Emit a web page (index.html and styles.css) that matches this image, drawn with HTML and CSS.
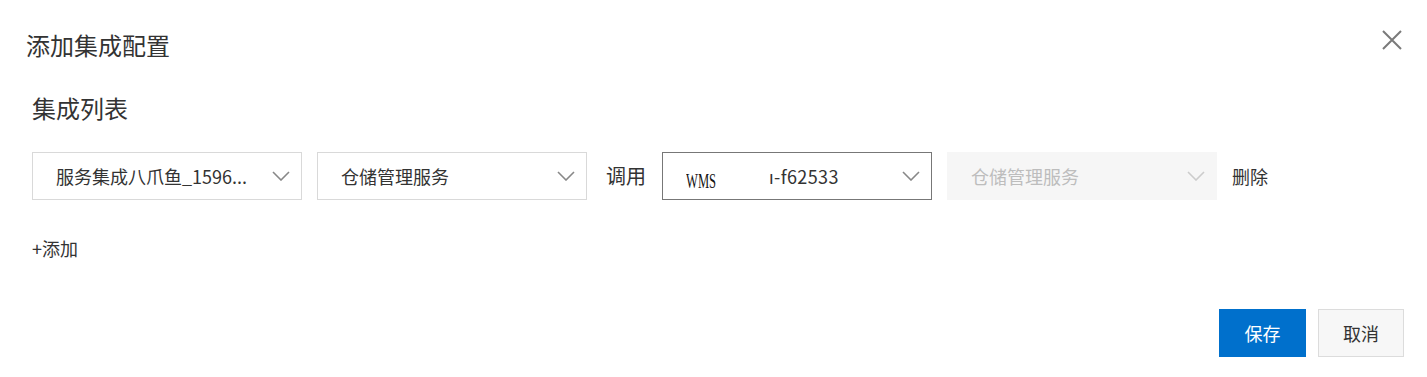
FILE: index.html
```html
<!DOCTYPE html>
<html lang="zh-CN">
<head>
<meta charset="utf-8">
<title>添加集成配置</title>
<link rel="stylesheet" href="styles.css">
</head>
<body>
<div class="dialog">
  <div class="dialog-header">
    <h1 class="dialog-title">添加集成配置</h1>
    <button class="close-btn" aria-label="关闭">
      <svg width="20" height="20" viewBox="0 0 20 20"><path d="M1 1 L19 19 M19 1 L1 19" stroke="#7a7a7a" stroke-width="2" fill="none"/></svg>
    </button>
  </div>
  <div class="dialog-body">
    <h2 class="section-title">集成列表</h2>
    <div class="config-row">
      <div class="select">
        <span class="select-text">服务集成八爪鱼_1596...</span>
        <svg class="chevron" width="18" height="10" viewBox="0 0 18 10"><polyline points="1,1 9,9 17,1" fill="none" stroke="#888" stroke-width="1.6"/></svg>
      </div>
      <div class="select">
        <span class="select-text">仓储管理服务</span>
        <svg class="chevron" width="18" height="10" viewBox="0 0 18 10"><polyline points="1,1 9,9 17,1" fill="none" stroke="#888" stroke-width="1.6"/></svg>
      </div>
      <span class="row-label">调用</span>
      <div class="select select-active">
        <span class="select-text"><span class="wms">WMS</span><span class="redacted"></span><span class="suffix">ı-f62533</span></span>
        <svg class="chevron" width="18" height="10" viewBox="0 0 18 10"><polyline points="1,1 9,9 17,1" fill="none" stroke="#888" stroke-width="1.6"/></svg>
      </div>
      <div class="select select-disabled">
        <span class="select-text">仓储管理服务</span>
        <svg class="chevron" width="18" height="10" viewBox="0 0 18 10"><polyline points="1,1 9,9 17,1" fill="none" stroke="#ccc" stroke-width="1.6"/></svg>
      </div>
      <span class="row-action">删除</span>
    </div>
    <div class="add-link">+添加</div>
  </div>
  <div class="dialog-footer">
    <button class="btn btn-primary">保存</button>
    <button class="btn btn-default">取消</button>
  </div>
</div>
</body>
</html>
```

FILE: styles.css
```css
* { box-sizing: border-box; }
html, body {
  margin: 0;
  padding: 0;
  background: #fff;
}
body {
  font-family: "Noto Sans CJK SC", "Noto Sans", sans-serif;
  color: #333;
  width: 1427px;
  height: 377px;
  overflow: hidden;
}
.dialog {
  display: flex;
  flex-direction: column;
  height: 377px;
}
.dialog-header {
  display: flex;
  justify-content: space-between;
  align-items: flex-start;
  padding: 29px 25px 0 26px;
}
.dialog-title {
  margin: 0;
  font-size: 24px;
  line-height: 32px;
  font-weight: 400;
  color: #333;
}
.close-btn {
  border: 0;
  background: none;
  padding: 0;
  margin-top: 1px;
  width: 20px;
  height: 20px;
  display: flex;
  cursor: pointer;
}
.dialog-body {
  padding: 31px 0 0 32px;
}
.section-title {
  margin: 0;
  font-size: 24px;
  line-height: 32px;
  font-weight: 400;
  color: #333;
}
.config-row {
  display: flex;
  align-items: center;
  gap: 15px;
  margin-top: 28px;
}
.select {
  width: 270px;
  height: 48px;
  border: 1px solid #d9d9d9;
  background: #fff;
  display: flex;
  align-items: center;
  justify-content: space-between;
  padding: 0 11px 0 23px;
  font-size: 18px;
  color: #333;
  flex: none;
}
.select-text {
  white-space: nowrap;
  display: flex;
  align-items: center;
}
.chevron { flex: none; }
.select-active {
  border-color: #777;
}
.select-disabled {
  background: #f6f6f6;
  border-color: #f6f6f6;
  color: #bdbdbd;
}
.wms {
  font-family: "Liberation Serif", serif;
  font-size: 20px;
  display: inline-block;
  width: 30px;
  transform: scaleX(0.63);
  transform-origin: left center;
  position: relative;
  top: 5px;
  color: #111;
}
.redacted {
  display: inline-block;
  width: 53px;
}
.suffix {
  color: #333;
  letter-spacing: 0.4px;
}
.row-label {
  font-size: 20px;
  line-height: 28px;
  padding: 0 1px 0 4px;
  color: #333;
}
.row-action {
  font-size: 18px;
  line-height: 26px;
  color: #333;
}
.add-link {
  margin-top: 35px;
  font-size: 18px;
  line-height: 26px;
  color: #333;
}
.dialog-footer {
  display: flex;
  justify-content: flex-end;
  gap: 12px;
  margin-top: auto;
  padding: 0 23px 20px 0;
}
.btn {
  height: 48px;
  font-family: inherit;
  font-size: 18px;
  border: 1px solid transparent;
  padding: 0;
  cursor: pointer;
}
.btn-primary {
  width: 87px;
  background: #0070cc;
  border-color: #0070cc;
  color: #fff;
}
.btn-default {
  width: 86px;
  background: #f7f7f7;
  border-color: #dcdcdc;
  color: #333;
}
```
